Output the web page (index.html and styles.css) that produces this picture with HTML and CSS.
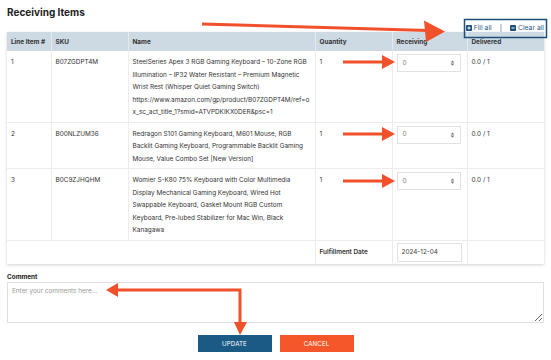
FILE: index.html
```html
<!DOCTYPE html>
<html lang="en">
<head>
<meta charset="UTF-8">
<title>Receiving Items</title>
<link rel="stylesheet" href="styles.css">
</head>
<body>
<div class="page">
  <h1 class="title">Receiving Items</h1>
  <div class="bulk">
    <a class="bulk-link" href="#"><svg class="bulk-icon" viewBox="0 0 10 10"><rect width="10" height="10" rx="1.5" fill="#1d4f78"/><path d="M5 2.3v5.4M2.3 5h5.4" stroke="#fff" stroke-width="1.6"/></svg>Fill all</a>
    <span class="bulk-sep">|</span>
    <a class="bulk-link" href="#"><svg class="bulk-icon" viewBox="0 0 10 10"><rect width="10" height="10" rx="1.5" fill="#1d4f78"/><path d="M2.3 5h5.4" stroke="#fff" stroke-width="1.6"/></svg>Clear all</a>
  </div>

  <div class="card">
    <table class="items">
      <colgroup>
        <col class="c-line"><col class="c-sku"><col class="c-name"><col class="c-qty"><col class="c-recv"><col class="c-deliv">
      </colgroup>
      <thead>
        <tr><th>Line Item #</th><th>SKU</th><th>Name</th><th>Quantity</th><th>Receiving</th><th>Delivered</th></tr>
      </thead>
      <tbody>
        <tr>
          <td>1</td>
          <td>B07ZGDPT4M</td>
          <td class="name">SteelSeries Apex 3 RGB Gaming Keyboard – 10-Zone RGB<br>Illumination – IP32 Water Resistant – Premium Magnetic<br>Wrist Rest (Whisper Quiet Gaming Switch)<br>https://www.amazon.com/gp/product/B07ZGDPT4M/ref=o<br>x_sc_act_title_1?smid=ATVPDKIKX0DER&amp;psc=1</td>
          <td>1</td>
          <td><div class="qty"><span>0</span><svg class="spin" viewBox="0 0 6 8"><path d="M3 0.5 5.5 3.2H0.5z M3 7.5 5.5 4.8H0.5z" fill="#777"/></svg></div></td>
          <td>0.0 / 1</td>
        </tr>
        <tr>
          <td>2</td>
          <td>B00NLZUM36</td>
          <td class="name">Redragon S101 Gaming Keyboard, M601 Mouse, RGB<br>Backlit Gaming Keyboard, Programmable Backlit Gaming<br>Mouse, Value Combo Set [New Version]</td>
          <td>1</td>
          <td><div class="qty"><span>0</span><svg class="spin" viewBox="0 0 6 8"><path d="M3 0.5 5.5 3.2H0.5z M3 7.5 5.5 4.8H0.5z" fill="#777"/></svg></div></td>
          <td>0.0 / 1</td>
        </tr>
        <tr>
          <td>3</td>
          <td>B0C9ZJHQHM</td>
          <td class="name">Womier S-K80 75% Keyboard with Color Multimedia<br>Display Mechanical Gaming Keyboard, Wired Hot<br>Swappable Keyboard, Gasket Mount RGB Custom<br>Keyboard, Pre-lubed Stabilizer for Mac Win, Black<br>Kanagawa</td>
          <td>1</td>
          <td><div class="qty"><span>0</span><svg class="spin" viewBox="0 0 6 8"><path d="M3 0.5 5.5 3.2H0.5z M3 7.5 5.5 4.8H0.5z" fill="#777"/></svg></div></td>
          <td>0.0 / 1</td>
        </tr>
        <tr class="meta">
          <td colspan="3" class="meta-blank"></td>
          <td class="meta-label">Fulfillment Date</td>
          <td><div class="date">2024-12-04</div></td>
          <td></td>
        </tr>
      </tbody>
    </table>
  </div>

  <div class="comment">
    <label class="comment-label" for="comment">Comment</label>
    <textarea id="comment" class="comment-box" placeholder="Enter your comments here..."></textarea>
  </div>

  <div class="actions">
    <button class="btn btn-update">UPDATE</button>
    <button class="btn btn-cancel">CANCEL</button>
  </div>
</div>

<!-- annotation overlay -->
<svg class="marks" viewBox="0 0 551 360">
  <rect x="464.5" y="19.5" width="82" height="18" fill="none" stroke="#1d4f78" stroke-width="1.5"/>
  <path d="M202 24 L428 30.5" stroke="#f0502a" stroke-width="3" fill="none"/>
  <path d="M445 31.5 L424 20.5 L426 42 Z" fill="#f0502a"/>
  <path d="M343 62H384" stroke="#f0502a" stroke-width="3"/>
  <path d="M395 62 L382 55 L382 69 Z" fill="#f0502a"/>
  <path d="M343 134H384" stroke="#f0502a" stroke-width="3"/>
  <path d="M395 134 L382 127 L382 141 Z" fill="#f0502a"/>
  <path d="M343 181H384" stroke="#f0502a" stroke-width="3"/>
  <path d="M395 181 L382 174 L382 188 Z" fill="#f0502a"/>
  <path d="M117 290H240V324" stroke="#f0502a" stroke-width="3" fill="none"/>
  <path d="M106 290 L118 283 L118 297 Z" fill="#f0502a"/>
  <path d="M240 335 L234 322 L247 322 Z" fill="#f0502a"/>
</svg>
</body>
</html>
```
FILE: styles.css
```css
*{margin:0;padding:0;box-sizing:border-box;}
html,body{height:100%;}
body{background:#fff; font-family:Inter,"Open Sans",sans-serif; font-size:6.4px; color:#333; overflow:hidden;}
.page{padding:0 7px;}

.title{font-size:10px; font-weight:700; color:#222; line-height:14px; padding-top:5px; height:23px;}

.bulk{display:flex; justify-content:flex-end; align-items:center; gap:6px; height:9px;}
.bulk-link{display:flex; align-items:center; gap:2px; color:#2b5f8c; text-decoration:none; font-size:6.8px;}
.bulk-icon{width:6px; height:6px;}
.bulk-sep{color:#2b5f8c; font-size:6.8px; padding:0 2px;}

.card{box-shadow:0 1px 3px rgba(0,0,0,.18); background:#fff;}
.items{width:100%; border-collapse:collapse; table-layout:fixed;}
.c-line{width:44px;} .c-sku{width:77px;} .c-name{width:187px;} .c-qty{width:77px;} .c-recv{width:75px;} .c-deliv{width:77px;}
.items th{background:#cdd9e3; text-align:left; font-weight:700; color:#333; height:19px; padding:0 4px; border-right:1px solid #e3e9ee;}
.items th:last-child{border-right:none;}
.items td{vertical-align:top; padding:5px 4px 3px; line-height:12.5px; color:#333; border-right:1px solid #ececec; border-bottom:1px solid #ececec;}
.items td:last-child{border-right:none;}
.items .name{white-space:nowrap;}

.qty{display:flex; align-items:center; justify-content:space-between; height:18px; width:64px; border:1px solid #e2e2e2; padding:0 5px; margin-top:-2px; color:#777;}
.spin{width:5px; height:6px;}

.meta td{border-bottom:none; vertical-align:middle; padding:2px 4px;}
.meta .meta-label{font-weight:600; color:#333;}
.date{height:19px; width:65px; border:1px solid #e2e2e2; padding-left:4px; line-height:17px; color:#444;}

.comment{padding-top:9px;}
.comment-label{display:block; font-weight:700; color:#222; line-height:8px; margin-bottom:1px;}
.comment-box{display:block; width:537px; height:41px; border:1px solid #e0e0e0; padding:4px; font-family:Inter,"Open Sans",sans-serif; font-size:6.4px; color:#333; resize:vertical;}
.comment-box::placeholder{color:#999;}

.actions{display:flex; justify-content:center; gap:8px; padding-top:12px;}
.btn{width:74px; height:17px; border:none; color:#fff; font-family:Inter,"Open Sans",sans-serif; font-size:6.2px; letter-spacing:.1px;}
.btn-update{background:#1b5a84;}
.btn-cancel{background:#f5572a;}

.marks{position:absolute; left:0; top:0; width:551px; height:360px; pointer-events:none;}
```
